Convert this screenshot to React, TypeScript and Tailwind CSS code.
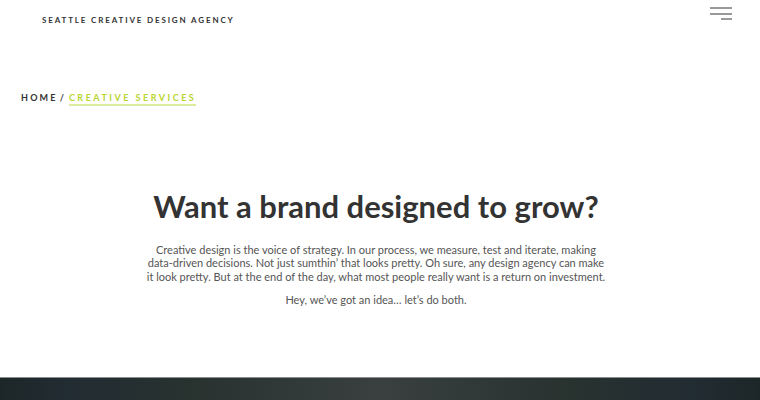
import React from "react";

export default function App() {
  return (
    <div className="w-[760px] h-[400px] bg-white overflow-hidden flex flex-col" style={{ fontFamily: "Lato, 'Open Sans', sans-serif" }}>
      <header className="flex items-start justify-between h-[60px]">
        <div className="pl-[42px] pt-[15px] text-[8px] font-bold tracking-[1.85px] text-[#333] leading-[10px]">
          SEATTLE CREATIVE DESIGN AGENCY
        </div>
        <button className="mr-[28px] mt-[7px] w-[22px] flex flex-col items-end gap-[3.5px]" aria-label="menu">
          <span className="block w-[22px] h-[2px] bg-[#999]" />
          <span className="block w-[22px] h-[2px] bg-[#999]" />
          <span className="block w-[11px] h-[2px] bg-[#999]" />
        </button>
      </header>
      <nav className="pl-[21px] pt-[32px] flex items-start text-[9px] font-bold tracking-[2.2px] leading-[12px]">
        <span className="text-[#333]">HOME</span>
        <span className="text-[#333] ml-[2px] mr-[5px] tracking-normal">/</span>
        <span className="text-[#b9d531] tracking-[2.5px] border-b-2 border-[#dcec9f]">CREATIVE SERVICES</span>
      </nav>
      <main className="flex-1 flex flex-col items-center pt-[82px] pr-[8px]">
        <h1 className="text-[31px] font-bold text-[#333] leading-[36px]">
          Want a brand designed to grow?
        </h1>
        <div className="mt-[19px] text-center text-[11px] leading-[13.3px] text-[#555]">
          <p>
            Creative design is the voice of strategy. In our process, we measure, test and iterate, making
            <br />
            data-driven decisions. Not just sumthin’ that looks pretty. Oh sure, any design agency can make
            <br />
            it look pretty. But at the end of the day, what most people really want is a return on investment.
          </p>
          <p className="mt-[10.5px]">Hey, we’ve got an idea… let’s do both.</p>
        </div>
      </main>
      <footer
        className="h-[23px] border-t border-[#8a8d8d]"
        style={{ background: "linear-gradient(90deg, #1d2627 0%, #222c33 9%, #28322f 25%, #323a3a 40%, #3a3f3f 50%, #323a3a 60%, #28322f 75%, #222c33 91%, #1d2627 100%)" }}
      />
    </div>
  );
}
